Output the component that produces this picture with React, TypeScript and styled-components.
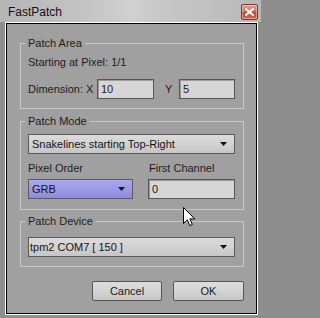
import React from "react";
import styled, { createGlobalStyle } from "styled-components";

const GlobalStyle = createGlobalStyle`
  html, body {
    margin: 0;
    padding: 0;
    background: #8e8e8e;
  }
  body {
    font-family: "Liberation Sans", Arial, sans-serif;
    font-size: 11px;
    color: #1c1c1c;
  }
  * {
    box-sizing: border-box;
  }
`;

const Window = styled.div`
  position: relative;
  width: 261px;
  height: 318px;
  display: flex;
  flex-direction: column;
  background: #8e8e8e;
  overflow: hidden;
`;

const TitleBar = styled.div`
  height: 22px;
  display: flex;
  align-items: center;
  justify-content: space-between;
  padding: 0 3px 0 8px;
  background: linear-gradient(
    to right,
    #b6b6b6 0%,
    #c2c2c2 30%,
    #d0d0d0 50%,
    #c6c6c6 65%,
    #b8b8b8 100%
  );
`;

const Title = styled.span`
  font-size: 12px;
  color: #111;
  padding-top: 1px;
`;

const CloseButton = styled.div`
  width: 17px;
  height: 16px;
  margin-top: 1px;
  display: flex;
  align-items: center;
  justify-content: center;
  border: 1px solid #7a3a2c;
  border-radius: 2px;
  background: linear-gradient(to bottom, #eaa08e 0%, #d8705a 45%, #c4472c 55%, #d86c50 100%);
  box-shadow: inset 0 0 0 1px rgba(255, 255, 255, 0.35);
`;

const Frame = styled.div`
  flex: 1;
  display: flex;
  padding: 0 3px 3px 5px;
`;

const Client = styled.div`
  flex: 1;
  display: flex;
  border: 1px solid #ffffff;
`;

const Body = styled.div`
  flex: 1;
  display: flex;
  flex-direction: column;
  padding: 12px 12px 0 13px;
  border: 1px solid #000000;
  background: #a0a0a0;
`;

const Group = styled.fieldset<{ $pb: number; $mb: number }>`
  margin: 0 0 ${(p) => p.$mb}px 0;
  min-inline-size: 0;
  padding: 0 8px ${(p) => p.$pb}px 7px;
  border: 1px solid #c8c8c8;
  display: flex;
  flex-direction: column;
`;

const Legend = styled.legend`
  padding: 0 3px;
  margin-left: -3px;
  line-height: 14px;
  height: 14px;
  font-size: 11px;
`;

const TextLine = styled.div<{ $mt: number }>`
  margin-top: ${(p) => p.$mt}px;
  line-height: 14px;
  height: 14px;
`;

const DimensionRow = styled.div`
  margin-top: 10px;
  display: flex;
  align-items: center;
  height: 20px;
`;

const RowLabel = styled.span<{ $w: number; $pl?: number }>`
  width: ${(p) => p.$w}px;
  padding-left: ${(p) => p.$pl ?? 0}px;
  flex-shrink: 0;
`;

const Field = styled.div<{ $w?: number }>`
  width: ${(p) => (p.$w ? `${p.$w}px` : "auto")};
  flex: ${(p) => (p.$w ? "none" : 1)};
  height: 20px;
  display: flex;
  align-items: center;
  padding-left: 3px;
  background: #d6d6d6;
  border: 1px solid #555555;
  box-shadow: inset 1px 1px 0 #9c9c9c;
  color: #1a1a1a;
`;

const Select = styled.div<{ $mt: number; $pad: number; $blue?: boolean }>`
  margin-top: ${(p) => p.$mt}px;
  height: 20px;
  display: flex;
  align-items: center;
  justify-content: space-between;
  padding: 0 7px 0 ${(p) => p.$pad}px;
  border: 1px solid #5a5a5a;
  background: ${(p) =>
    p.$blue
      ? "linear-gradient(to bottom, #aaaaf2 0%, #9a9ae6 50%, #8c8cd8 100%)"
      : "linear-gradient(to bottom, #dcdcdc 0%, #d2d2d2 50%, #c6c6c6 100%)"};
  color: #141414;
`;

const Columns = styled.div`
  margin-top: 7px;
  display: grid;
  grid-template-columns: 105px 87px;
  column-gap: 15px;
`;

const Column = styled.div`
  display: flex;
  flex-direction: column;
`;

const ColumnLabel = styled.div<{ $pl?: number }>`
  line-height: 14px;
  height: 14px;
  padding-left: ${(p) => p.$pl ?? 0}px;
  margin-bottom: 4px;
`;

const ButtonRow = styled.div`
  margin-top: 14px;
  display: flex;
  justify-content: flex-end;
  gap: 11px;
`;

const Button = styled.div<{ $w: number }>`
  width: ${(p) => p.$w}px;
  height: 20px;
  display: flex;
  align-items: center;
  justify-content: center;
  font-size: 11px;
  border: 1px solid #555555;
  border-radius: 2px;
  background: linear-gradient(to bottom, #dedede 0%, #d4d4d4 50%, #c6c6c6 100%);
  color: #1a1a1a;
`;

const Cursor = styled.svg`
  position: absolute;
  left: 183px;
  top: 207px;
`;

function Arrow() {
  return (
    <svg width="7" height="4" viewBox="0 0 7 4">
      <polygon points="0,0 7,0 3.5,4" fill="#111" />
    </svg>
  );
}

export default function App() {
  return (
    <>
      <GlobalStyle />
      <Window>
        <TitleBar>
          <Title>FastPatch</Title>
          <CloseButton>
            <svg width="9" height="8" viewBox="0 0 9 8">
              <path d="M1 1 L8 7 M8 1 L1 7" stroke="#ffffff" strokeWidth="2" strokeLinecap="square" />
            </svg>
          </CloseButton>
        </TitleBar>
        <Frame>
          <Client>
            <Body>
              <Group $pb={9} $mb={5}>
                <Legend>Patch Area</Legend>
                <TextLine $mt={5}>Starting at Pixel: 1/1</TextLine>
                <DimensionRow>
                  <RowLabel $w={69}>Dimension: X</RowLabel>
                  <Field $w={57}>10</Field>
                  <RowLabel $w={25} $pl={11}>Y</RowLabel>
                  <Field>5</Field>
                </DimensionRow>
              </Group>

              <Group $pb={10} $mb={4}>
                <Legend>Patch Mode</Legend>
                <Select $mt={6} $pad={3}>
                  <span>Snakelines starting Top-Right</span>
                  <Arrow />
                </Select>
                <Columns>
                  <Column>
                    <ColumnLabel>Pixel Order</ColumnLabel>
                    <Select $mt={0} $pad={3} $blue>
                      <span>GRB</span>
                      <Arrow />
                    </Select>
                  </Column>
                  <Column>
                    <ColumnLabel $pl={1}>First Channel</ColumnLabel>
                    <Field>0</Field>
                  </Column>
                </Columns>
              </Group>

              <Group $pb={9} $mb={0}>
                <Legend>Patch Device</Legend>
                <Select $mt={9} $pad={1}>
                  <span>tpm2 COM7 [ 150 ]</span>
                  <Arrow />
                </Select>
              </Group>

              <ButtonRow>
                <Button $w={70}>Cancel</Button>
                <Button $w={71}>OK</Button>
              </ButtonRow>
            </Body>
          </Client>
        </Frame>
        <Cursor width="13" height="20" viewBox="0 0 13 20">
          <path
            d="M0.5 0.5 L0.5 16.5 L4.3 12.8 L6.8 18.6 L9.3 17.5 L6.9 11.9 L11.8 11.9 Z"
            fill="#ffffff"
            stroke="#000000"
            strokeWidth="1"
            strokeLinejoin="miter"
          />
        </Cursor>
      </Window>
    </>
  );
}
